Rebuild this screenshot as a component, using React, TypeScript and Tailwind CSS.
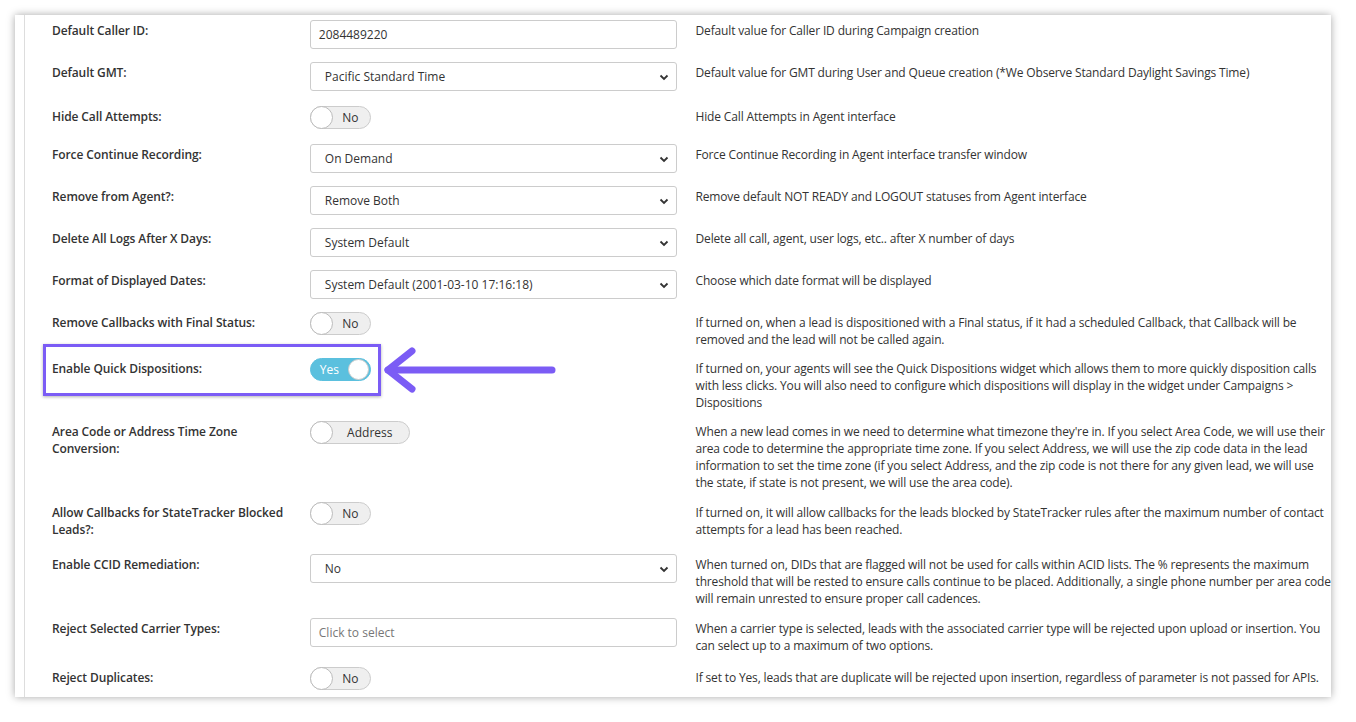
import React from "react";

const Chevron = () => (
  <svg width="12" height="12" viewBox="0 0 12 12" className="absolute right-[6px] top-[8px]">
    <path d="M2.5 4.5 L6 8 L9.5 4.5" fill="none" stroke="#333" strokeWidth="1.8" />
  </svg>
);

const Select = ({ v }: { v: string }) => (
  <div className="relative w-[367px] h-[29px] border border-[#ccc] rounded-[3px] bg-white pl-[14px] flex items-center text-[12px] text-[#333]">
    {v}
    <Chevron />
  </div>
);
const Input = ({ v, ph }: { v?: string; ph?: boolean }) => (
  <div className={`w-[367px] h-[29px] border border-[#ccc] rounded-[3px] bg-white pl-[8px] flex items-center text-[12px] ${ph ? "text-[#777]" : "text-[#333]"}`}>
    {v}
  </div>
);
const Toggle = ({ v, on, w = 61 }: { v: string; on?: boolean; w?: number }) =>
  on ? (
    <div className="h-[23px] rounded-full bg-[#5bc0de] border border-[#5bc0de] flex items-center justify-between pl-[9px] pr-[1px] text-white text-[12px]" style={{ width: w }}>
      Yes
      <div className="w-[21px] h-[21px] rounded-full bg-white border border-[#ccc]" />
    </div>
  ) : (
    <div className="h-[23px] rounded-full bg-[#efefef] border border-[#ccc] flex items-center pr-[2px] text-[#333] text-[12px]" style={{ width: w }}>
      <div className="w-[23px] h-[23px] -ml-[1px] rounded-full bg-white border border-[#bbb]" />
      <span className="flex-1 text-center">{v}</span>
    </div>
  );

type Row = { label: React.ReactNode; ctl: React.ReactNode; desc: React.ReactNode; h: number; tog?: boolean };

const rows: Row[] = [
  { label: "Default Caller ID:", ctl: <Input v="2084489220" />, desc: "Default value for Caller ID during Campaign creation", h: 42 },
  { label: "Default GMT:", ctl: <Select v="Pacific Standard Time" />, desc: "Default value for GMT during User and Queue creation (*We Observe Standard Daylight Savings Time)", h: 44 },
  { label: "Hide Call Attempts:", ctl: <Toggle v="No" />, desc: "Hide Call Attempts in Agent interface", h: 38, tog: true },
  { label: "Force Continue Recording:", ctl: <Select v="On Demand" />, desc: "Force Continue Recording in Agent interface transfer window", h: 42 },
  { label: "Remove from Agent?:", ctl: <Select v="Remove Both" />, desc: "Remove default NOT READY and LOGOUT statuses from Agent interface", h: 42 },
  { label: "Delete All Logs After X Days:", ctl: <Select v="System Default" />, desc: "Delete all call, agent, user logs, etc.. after X number of days", h: 42 },
  { label: "Format of Displayed Dates:", ctl: <Select v="System Default (2001-03-10 17:16:18)" />, desc: "Choose which date format will be displayed", h: 42 },
  { label: "Remove Callbacks with Final Status:", ctl: <Toggle v="No" />, desc: "If turned on, when a lead is dispositioned with a Final status, if it had a scheduled Callback, that Callback will be removed and the lead will not be called again.", h: 46, tog: true },
  { label: "Enable Quick Dispositions:", ctl: <Toggle v="Yes" on />, desc: "If turned on, your agents will see the Quick Dispositions widget which allows them to more quickly disposition calls with less clicks. You will also need to configure which dispositions will display in the widget under Campaigns > Dispositions", h: 63, tog: true },
  { label: <>Area Code or Address Time Zone<br />Conversion:</>, ctl: <Toggle v="Address" w={100} />, desc: "When a new lead comes in we need to determine what timezone they're in. If you select Area Code, we will use their area code to determine the appropriate time zone. If you select Address, we will use the zip code data in the lead information to set the time zone (if you select Address, and the zip code is not there for any given lead, we will use the state, if state is not present, we will use the area code).", h: 81, tog: true },
  { label: <>Allow Callbacks for StateTracker Blocked<br />Leads?:</>, ctl: <Toggle v="No" />, desc: "If turned on, it will allow callbacks for the leads blocked by StateTracker rules after the maximum number of contact attempts for a lead has been reached.", h: 52, tog: true },
  { label: "Enable CCID Remediation:", ctl: <Select v="No" />, desc: "When turned on, DIDs that are flagged will not be used for calls within ACID lists. The % represents the maximum threshold that will be rested to ensure calls continue to be placed. Additionally, a single phone number per area code will remain unrested to ensure proper call cadences.", h: 64 },
  { label: "Reject Selected Carrier Types:", ctl: <Input v="Click to select" ph />, desc: "When a carrier type is selected, leads with the associated carrier type will be rejected upon upload or insertion. You can select up to a maximum of two options.", h: 49 },
  { label: "Reject Duplicates:", ctl: <Toggle v="No" />, desc: "If set to Yes, leads that are duplicate will be rejected upon insertion, regardless of parameter is not passed for APIs.", h: 40, tog: true },
];

export default function App() {
  return (
    <div className="w-[1356px] h-[722px] bg-white overflow-hidden relative" style={{ fontFamily: '"Open Sans", sans-serif' }}>
      <div className="absolute left-[15px] top-[15px] w-[1316px] h-[682px] bg-white shadow-[0_0_8px_rgba(0,0,0,0.35)] overflow-hidden">
        <div className="ml-[9px] h-full border-l border-[#ddd] pt-[6px] pl-[27px]">
          {rows.map((r, i) => (
            <div key={i} className="flex items-start" style={{ height: r.h }}>
              <div className="w-[258px] text-[12px] font-semibold text-[#333] leading-[17px] tracking-[-0.1px] pt-[1px]">{r.label}</div>
              <div className="w-[386px] -mt-[1px]">{r.ctl}</div>
              <div className="w-[636px] text-[12px] text-[#333] leading-[17px] tracking-[-0.15px] pt-[1px]">{r.desc}</div>
            </div>
          ))}
        </div>
      </div>
      <div className="absolute left-[43px] top-[344px] w-[338px] h-[52px] border-[3px] border-[#7b5cf5] shadow-[0_1px_3px_rgba(0,0,0,0.3)]" />
      <svg className="absolute left-[380px] top-[345px]" width="185" height="50" viewBox="0 0 185 50">
        <path d="M8 25 L172 25" stroke="#7b5cf5" strokeWidth="7" strokeLinecap="round" />
        <path d="M32 6 L8 25 L32 44" fill="none" stroke="#7b5cf5" strokeWidth="7" strokeLinecap="round" strokeLinejoin="round" />
      </svg>
    </div>
  );
}
